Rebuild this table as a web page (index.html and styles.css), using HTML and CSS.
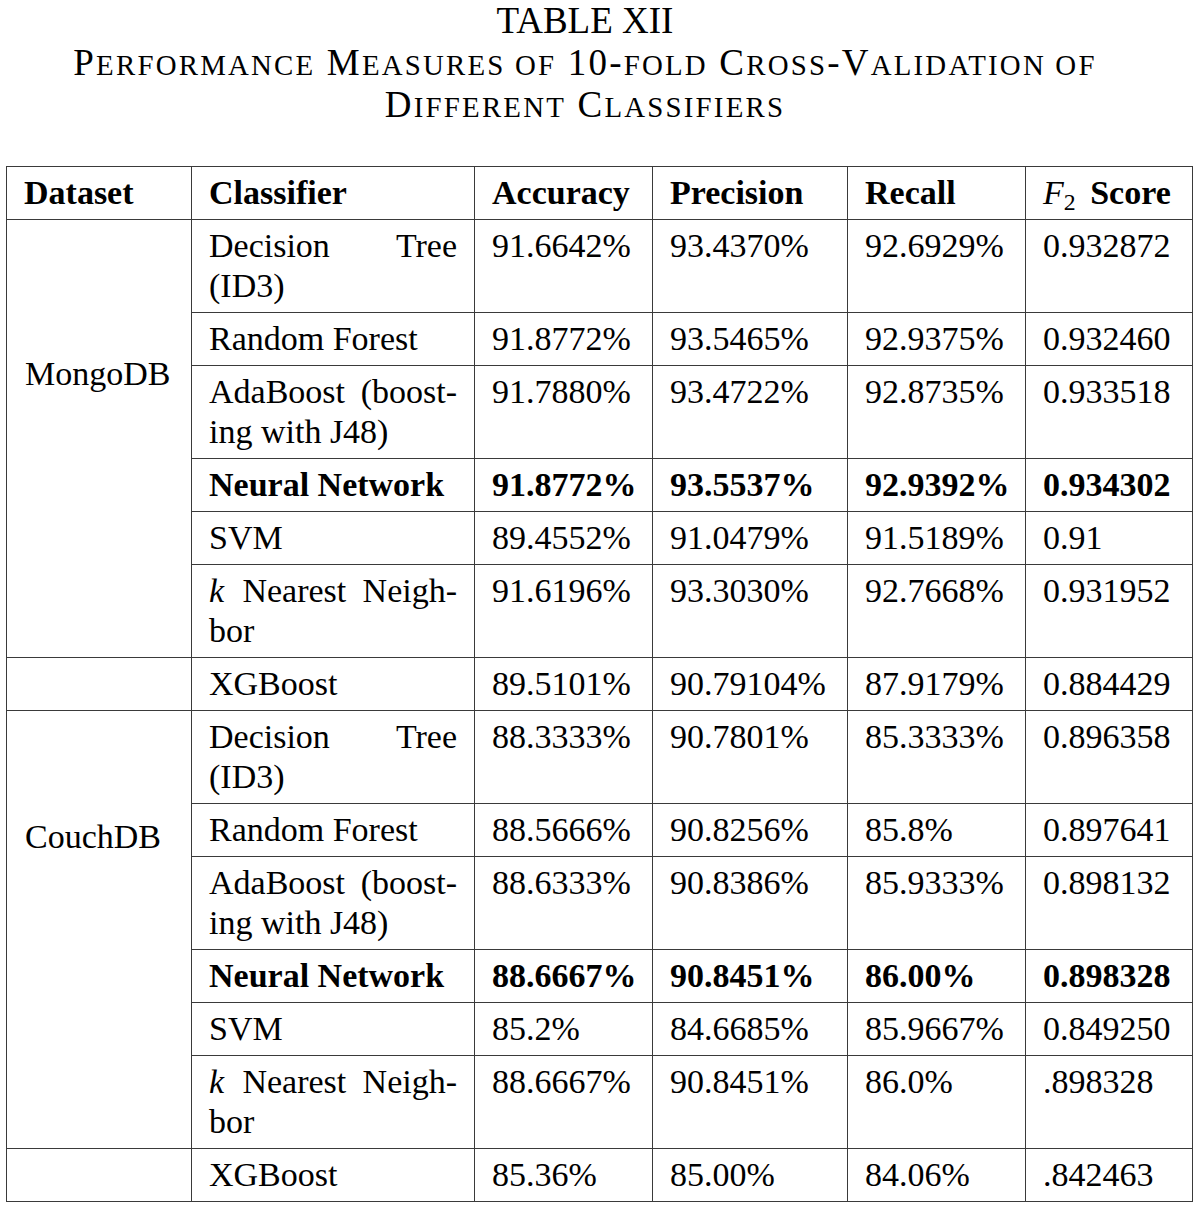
FILE: index.html
```html
<!DOCTYPE html>
<html lang="en">
<head>
  <meta charset="UTF-8" />
  <title>Table XII</title>
  <link rel="stylesheet" href="styles.css">
</head>
<body>

  <!-- Caption -->
  <div class="caption">
    <div>TABLE XII</div>
    <div class="sc">P<span>erformance</span> M<span>easures of</span> 10-<span>fold</span> C<span>ross</span>-V<span>alidation of</span></div>
    <div class="sc">D<span>ifferent</span> C<span>lassifiers</span></div>
  </div>

  <!-- Results table -->
  <table class="results">
    <colgroup>
      <col class="c-data">
      <col class="c-clf">
      <col class="c-acc">
      <col class="c-prec">
      <col class="c-rec">
      <col class="c-f2">
    </colgroup>
    <thead>
      <tr>
        <th>Dataset</th>
        <th>Classifier</th>
        <th>Accuracy</th>
        <th>Precision</th>
        <th>Recall</th>
        <th><i class="math">F</i><sub>2</sub> <span class="score">Score</span></th>
      </tr>
    </thead>
    <tbody>
      <tr>
        <td rowspan="6" class="dataset mongo">MongoDB</td>
        <td class="clf">Decision Tree (ID3)</td>
        <td>91.6642%</td><td>93.4370%</td><td>92.6929%</td><td>0.932872</td>
      </tr>
      <tr>
        <td class="clf">Random Forest</td>
        <td>91.8772%</td><td>93.5465%</td><td>92.9375%</td><td>0.932460</td>
      </tr>
      <tr>
        <td class="clf">AdaBoost (boost&shy;ing with J48)</td>
        <td>91.7880%</td><td>93.4722%</td><td>92.8735%</td><td>0.933518</td>
      </tr>
      <tr class="best">
        <td class="clf">Neural Network</td>
        <td>91.8772%</td><td>93.5537%</td><td>92.9392%</td><td>0.934302</td>
      </tr>
      <tr>
        <td class="clf">SVM</td>
        <td>89.4552%</td><td>91.0479%</td><td>91.5189%</td><td>0.91</td>
      </tr>
      <tr>
        <td class="clf"><i class="math k">k</i> Nearest Neigh&shy;bor</td>
        <td>91.6196%</td><td>93.3030%</td><td>92.7668%</td><td>0.931952</td>
      </tr>
      <tr>
        <td></td>
        <td class="clf">XGBoost</td>
        <td>89.5101%</td><td>90.79104%</td><td>87.9179%</td><td>0.884429</td>
      </tr>

      <tr>
        <td rowspan="6" class="dataset couch">CouchDB</td>
        <td class="clf">Decision Tree (ID3)</td>
        <td>88.3333%</td><td>90.7801%</td><td>85.3333%</td><td>0.896358</td>
      </tr>
      <tr>
        <td class="clf">Random Forest</td>
        <td>88.5666%</td><td>90.8256%</td><td>85.8%</td><td>0.897641</td>
      </tr>
      <tr>
        <td class="clf">AdaBoost (boost&shy;ing with J48)</td>
        <td>88.6333%</td><td>90.8386%</td><td>85.9333%</td><td>0.898132</td>
      </tr>
      <tr class="best">
        <td class="clf">Neural Network</td>
        <td>88.6667%</td><td>90.8451%</td><td>86.00%</td><td>0.898328</td>
      </tr>
      <tr>
        <td class="clf">SVM</td>
        <td>85.2%</td><td>84.6685%</td><td>85.9667%</td><td>0.849250</td>
      </tr>
      <tr>
        <td class="clf"><i class="math k">k</i> Nearest Neigh&shy;bor</td>
        <td>88.6667%</td><td>90.8451%</td><td>86.0%</td><td>.898328</td>
      </tr>
      <tr>
        <td></td>
        <td class="clf">XGBoost</td>
        <td>85.36%</td><td>85.00%</td><td>84.06%</td><td>.842463</td>
      </tr>
    </tbody>
  </table>

</body>
</html>
```

FILE: styles.css
```css
* { margin: 0; padding: 0; box-sizing: border-box; }
body {
  font-family: "Liberation Serif", "Times New Roman", serif;
  background-color: #fff;
  color: #000;
  padding: 0 5px 0 6px;
}

/* Caption */
.caption {
  width: 1158px;
  text-align: center;
  font-size: 37px;
  line-height: 42px;
  margin-bottom: 40px;
}
.caption .sc { letter-spacing: 2.2px; }
.caption .sc span {
  font-size: 0.78em;
  line-height: 20px;
  text-transform: uppercase;
}

/* Table */
.results {
  width: 1187px;
  table-layout: fixed;
  border-collapse: collapse;
  font-size: 34px;
  line-height: 40px;
}

.c-data { width: 185px; }
.c-clf  { width: 283px; }
.c-acc  { width: 178px; }
.c-prec { width: 195px; }
.c-rec  { width: 178px; }
.c-f2   { width: 167px; }

.results th,
.results td {
  border: 1px solid #3a3a3a;
  padding: 6px 17px 6px 17px;
  text-align: left;
  vertical-align: top;
  white-space: nowrap;
}

.results th { font-weight: bold; }

.results td.clf {
  white-space: normal;
  text-align: justify;
  hyphens: manual;
}

.results td.dataset { padding-left: 18px; }
.results td.mongo { padding-top: 134px; }
.results td.couch { padding-top: 106px; }

.results tr.best td { font-weight: bold; }

.math {
  font-style: italic;
  font-weight: normal;
}
.math.k { margin-right: 2px; }

.results sub {
  font-size: 0.7em;
  line-height: 0;
  vertical-align: -0.25em;
  font-weight: normal;
}
.score { margin-left: 6px; }
```
